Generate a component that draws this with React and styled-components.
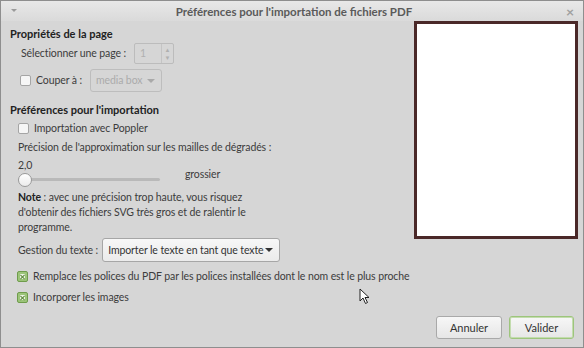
import React from "react";
import styled, { createGlobalStyle } from "styled-components";

const Global = createGlobalStyle`
  html, body { margin: 0; padding: 0; background: #d6d6d6; }
  body {
    font-family: Lato, "Noto Sans", sans-serif;
    font-size: 10.5px;
    letter-spacing: -0.1px;
    color: #3c3c3c;
  }
`;

const App = () => {
  return (
    <Window>
      <Global />
      <TitleBar>
        <MenuArrow />
        <Title>Préférences pour l'importation de fichiers PDF</Title>
        <Close>×</Close>
      </TitleBar>
      <Body>
        <Left>
          <Heading>Propriétés de la page</Heading>
          <Row indent={11} top={2}>
            <Label>Sélectionner une page :</Label>
            <Spin>
              <span>1</span>
              <SpinArrows>
                <span>▲</span>
                <span>▼</span>
              </SpinArrows>
            </Spin>
          </Row>
          <Row indent={10} top={5}>
            <Check />
            <Label>Couper à :</Label>
            <Combo disabled width={72} gap={4}>
              <span>media box</span>
              <Caret disabled />
            </Combo>
          </Row>
          <Heading top={10}>Préférences pour l'importation</Heading>
          <Row indent={8} top={4}>
            <Check />
            <Label>Importation avec Poppler</Label>
          </Row>
          <Para top={4}>Précision de l'approximation sur les mailles de dégradés :</Para>
          <Para top={3}>2,0</Para>
          <SliderRow>
            <Track>
              <Knob />
            </Track>
            <SliderLabel>grossier</SliderLabel>
          </SliderRow>
          <Note>
            <b>Note</b> : avec une précision trop haute, vous risquez
            <br />
            d'obtenir des fichiers SVG très gros et de ralentir le
            <br />
            programme.
          </Note>
          <Row indent={8} top={3}>
            <Label>Gestion du texte :</Label>
            <Combo width={178} gap={0}>
              <span>Importer le texte en tant que texte</span>
              <Caret />
            </Combo>
          </Row>
          <Row indent={7} top={7}>
            <Check checked>
              <CheckMark />
            </Check>
            <Label>Remplace les polices du PDF par les polices installées dont le nom est le plus proche</Label>
          </Row>
          <Row indent={7} top={6}>
            <Check checked>
              <CheckMark />
            </Check>
            <Label>Incorporer les images</Label>
          </Row>
        </Left>
        <Right>
          <Preview />
        </Right>
      </Body>
      <Footer>
        <Button>Annuler</Button>
        <Button primary>Valider</Button>
      </Footer>
      <Cursor viewBox="0 0 12 17" width="12" height="17">
        <path d="M1 1 L1 13 L4 10 L6.5 15.5 L8.5 14.5 L6 9.5 L10 9.5 Z" fill="#fff" stroke="#222" strokeWidth="1" strokeLinejoin="round" />
      </Cursor>
    </Window>
  );
};

export default App;

const Window = styled.div`
  position: relative;
  width: 584px;
  height: 348px;
  box-sizing: border-box;
  border: 1px solid #8e8e8e;
  background: #d6d6d6;
  display: flex;
  flex-direction: column;
  overflow: hidden;
`;

const TitleBar = styled.div`
  height: 20px;
  display: flex;
  align-items: center;
  justify-content: center;
  position: relative;
  background: linear-gradient(#e8e8e8, #dadada);
`;

const MenuArrow = styled.div`
  position: absolute;
  left: 10px;
  top: 8px;
  width: 0;
  height: 0;
  border-left: 3px solid transparent;
  border-right: 3px solid transparent;
  border-top: 3px solid #9a9a9a;
`;

const Title = styled.div`
  font-weight: bold;
  font-size: 11.5px;
  letter-spacing: 0;
  color: #5a5a5a;
  margin-left: 4px;
`;

const Close = styled.div`
  position: absolute;
  right: 9px;
  top: 2px;
  font-size: 14px;
  color: #a0a0a0;
  font-weight: bold;
`;

const Body = styled.div`
  flex: 1;
  display: grid;
  grid-template-columns: 413px 1fr;
`;

const Left = styled.div`
  min-width: 0;
  padding: 5px 0 0 9px;
  display: flex;
  flex-direction: column;
`;

const Right = styled.div`
  padding-top: 0;
`;

const Preview = styled.div`
  width: 158px;
  height: 212px;
  background: #fff;
  border: 3px solid #4a2828;
`;

const Heading = styled.div`
  font-weight: bold;
  font-size: 11px;
  letter-spacing: 0;
  color: #222;
  line-height: 15px;
  margin-top: ${(p) => p.top || 0}px;
`;

const Row = styled.div`
  display: flex;
  align-items: center;
  margin-left: ${(p) => p.indent || 0}px;
  margin-top: ${(p) => p.top || 0}px;
  min-height: 15px;
  line-height: 15px;
`;

const Label = styled.span`
  color: #3c3c3c;
  white-space: nowrap;
  margin-right: 4px;
`;

const Spin = styled.div`
  width: 40px;
  height: 21px;
  flex-shrink: 0;
  box-sizing: border-box;
  margin-left: 4px;
  border: 1px solid #bcbcbc;
  border-radius: 2px;
  display: flex;
  align-items: center;
  justify-content: space-between;
  color: #b0b0b0;
  padding-left: 5px;
`;

const SpinArrows = styled.div`
  height: 100%;
  width: 11px;
  border-left: 1px solid #c4c4c4;
  display: flex;
  flex-direction: column;
  align-items: center;
  justify-content: center;
  font-size: 6px;
  line-height: 8px;
  color: #b0b0b0;
`;

const Check = styled.div`
  width: 11px;
  height: 11px;
  flex-shrink: 0;
  box-sizing: border-box;
  margin-right: 5px;
  border-radius: 2px;
  border: 1px solid ${(p) => (p.checked ? "#6f9c4c" : "#a5a5a5")};
  background: ${(p) => (p.checked ? "#9cc47a" : "#f6f6f6")};
  display: flex;
  align-items: center;
  justify-content: center;
`;

const CheckMark = styled.div`
  width: 5px;
  height: 5px;
  background: #eef5e6;
  position: relative;
  &::before,
  &::after {
    content: "";
    position: absolute;
    left: 2px;
    top: -0.5px;
    width: 1px;
    height: 6px;
    background: #5e8a3c;
    transform: rotate(45deg);
  }
  &::after {
    transform: rotate(-45deg);
  }
`;

const Combo = styled.div`
  width: ${(p) => p.width}px;
  height: ${(p) => (p.disabled ? 23 : 24)}px;
  flex-shrink: 0;
  box-sizing: border-box;
  margin-left: ${(p) => p.gap}px;
  border: 1px solid ${(p) => (p.disabled ? "#bdbdbd" : "#a6a6a6")};
  border-radius: 3px;
  background: ${(p) => (p.disabled ? "#d6d6d6" : "linear-gradient(#f7f7f7, #ebebeb)")};
  color: ${(p) => (p.disabled ? "#ababab" : "#333")};
  display: flex;
  align-items: center;
  padding: 0 6px 0 5px;
  white-space: nowrap;
`;

const Caret = styled.div`
  margin-left: auto;
  width: 0;
  height: 0;
  border-left: 4px solid transparent;
  border-right: 4px solid transparent;
  border-top: 4px solid ${(p) => (p.disabled ? "#a9a9a9" : "#333")};
`;

const Para = styled.div`
  margin-left: 8px;
  margin-top: ${(p) => p.top || 0}px;
  line-height: 15px;
`;

const SliderRow = styled.div`
  display: flex;
  align-items: flex-start;
  margin-left: 8px;
  margin-top: -1px;
  height: 14px;
`;

const Track = styled.div`
  position: relative;
  width: 142px;
  height: 3px;
  border-radius: 2px;
  background: #b9b9b9;
  margin-top: 6px;
`;

const Knob = styled.div`
  position: absolute;
  left: 0;
  top: -5.5px;
  width: 14px;
  height: 14px;
  box-sizing: border-box;
  border-radius: 50%;
  border: 1px solid #9a9a9a;
  background: linear-gradient(#ffffff, #ececec);
`;

const SliderLabel = styled.span`
  margin-left: 25px;
  margin-top: -5px;
  line-height: 15px;
`;

const Note = styled.div`
  margin-left: 8px;
  margin-top: 4px;
  line-height: 15px;
  b {
    font-weight: bold;
    color: #222;
  }
`;

const Footer = styled.div`
  display: flex;
  justify-content: flex-end;
  gap: 7px;
  padding: 0 9px 8px 0;
`;

const Button = styled.button`
  width: ${(p) => (p.primary ? 65 : 66)}px;
  height: 23px;
  font-family: inherit;
  font-size: 11px;
  color: #333;
  border-radius: 3px;
  border: 1px solid ${(p) => (p.primary ? "#9dc57c" : "#a9a9a9")};
  box-shadow: ${(p) => (p.primary ? "inset 0 0 0 1px #c3dcae" : "none")};
  background: linear-gradient(#f7f7f7, #e6e6e6);
  padding: 0;
`;

const Cursor = styled.svg`
  position: absolute;
  left: 358px;
  top: 287px;
`;
